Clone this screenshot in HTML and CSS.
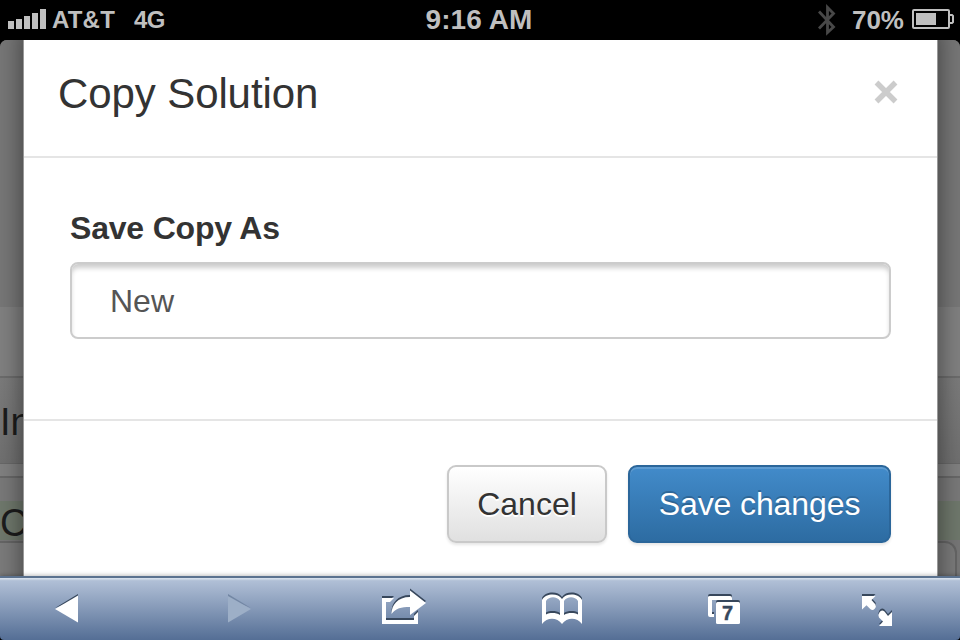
FILE: index.html
```html
<!DOCTYPE html>
<html lang="en">
<head>
<meta charset="utf-8">
<title>Copy Solution</title>
<link rel="stylesheet" href="styles.css">
</head>
<body>
<div class="phone">
  <header class="status">
    <div class="carrier">
      <svg class="signal" width="38" height="20" viewBox="0 0 38 20" fill="#bfbfbf"><path d="M0 12h6v8H0zM8 10h6v10H8zM16 7h6v13h-6zM24 4h6v16h-6zM32 0h6v20h-6z"/></svg>
      <span class="name">AT&amp;T</span><span class="net">4G</span>
    </div>
    <div class="time">9:16 AM</div>
    <div class="power">
      <svg class="bt" width="18" height="32" viewBox="0 0 18 32" fill="none" stroke="#484848" stroke-width="2.8"><path d="M1 7.500L15.500 23 9.500 28.500V3.500l6 6L1 24.500"/></svg>
      <span>70%</span>
      <svg class="battery" width="42" height="20" viewBox="0 0 42 20"><rect x="1" y="1" width="36" height="18" rx="1" fill="none" stroke="#bfbfbf" stroke-width="2"/><path d="M4 4h20v12H4z" fill="#bfbfbf"/><path d="M37 6h3l1 1v6l-1 1h-3" fill="none" stroke="#bfbfbf" stroke-width="2"/></svg>
    </div>
  </header>
  <main class="page">
    <div class="hero"></div>
    <div class="strip"></div>
    <div class="bar">Inputs</div>
    <div class="gap"></div>
    <div class="lead"></div>
    <div class="green">Cost</div>
    <div class="field"></div>
    <section class="modal">
      <div class="modal-head"><h1>Copy Solution</h1>
        <svg class="close" width="24" height="24" viewBox="0 0 24 24" stroke="#ccc" stroke-width="5.4"><path d="M2.500 2.500l19 19M21.500 2.500l-19 19"/></svg>
      </div>
      <div class="modal-body">
        <label>Save Copy As</label>
        <div class="input">New</div>
      </div>
      <div class="modal-foot"><button class="btn">Cancel</button><button class="btn primary">Save changes</button></div>
    </section>
  </main>
  <nav class="toolbar">
    <svg width="960" height="62" viewBox="0 578 960 62">
      <defs>
        <g id="share"><path d="M382 598h12l-4 4h-4v18h28v-4l4-4v12h-36z"/><path d="M410 590.500l16 12.500-16 12v-8c-9 0-14 1-18.500 7 0-9 6-17 18.500-17z"/></g>
        <path id="book" fill-rule="evenodd" d="M542 600c4-7 16-7 20-1 4-6 16-6 20 1v24c-5-7-15-7-20 0-5-7-15-7-20 0zM546 601v13.500c4-2 10-2 14 .5v-14c-3-5-11-5-14 0zM564 601v14c4-2.500 10-2.500 14-.5V601c-3-5-11-5-14 0z"/>
        <path id="expand" d="M862 596h13.500l-4 4 4 4.500q1 2-.8 4.200t-4.200.6l-4-4-4.500 4.200zM892 612v14h-13l4-4.500-4-4q-1.500-2.500.5-5.300t5-.7l3.500 4.500z"/>
      </defs>
      <path d="M55 608l23-14v5z" fill="#37475c"/><path d="M55 609l23-13.500v27z" fill="#fff"/>
      <path d="M228 594l23 14-23-9z" fill="#7387a4"/><path d="M228 596l23 13-23 13.500z" fill="#9dafc7"/>
      <use href="#share" y="-2" fill="#37475c"/><use href="#share" fill="#fff"/>
      <use href="#book" y="-2" fill="#37475c"/><use href="#book" fill="#fff"/>
      <path d="M708 596q0-2 2-2h20q2 0 2 2v2h-24z" fill="#37475c"/><path d="M708 597q0-1 2-1h20q2 0 2 2v3h-4v-1h-16v12h2v5h-4q-2 0-2-2z" fill="#fff"/>
      <path d="M712 612h2v2h-2zM716 602q0-2 2-2h20q2 0 2 2v3h-24z" fill="#37475c"/><rect x="716" y="602" width="24" height="22" rx="1.500" fill="#fff"/><text x="727.500" y="620" class="tabs">7</text>
      <use href="#expand" y="-2" fill="#37475c"/><use href="#expand" fill="#fff"/>
      <path d="M0 636q0 4 4 4H0zM960 636q0 4-4 4h4z" fill="#000"/>
    </svg>
  </nav>
</div>
</body>
</html>
```
FILE: styles.css
```css
* { box-sizing: border-box; }
body { margin: 0; background: #000; font-family: "Liberation Sans", Arial, sans-serif; }
.phone { width: 960px; height: 640px; overflow: hidden; display: flex; flex-direction: column; }
.status { height: 40px; flex: none; display: grid; grid-template-columns: 1fr auto 1fr; align-items: center; color: #bfbfbf; font-weight: bold; font-size: 24px; line-height: 40px; }
.carrier { display: flex; align-items: center; padding-left: 8px; }
.signal { margin-top: -2px; }
.name { margin-left: 6px; width: 82px; letter-spacing: .2px; }
.net { letter-spacing: -0.5px; }
.time { font-size: 28px; letter-spacing: .1px; margin-left: -2px; }
.power { display: flex; align-items: center; justify-content: flex-end; padding-right: 6px; font-size: 26px; }
.bt { margin-right: 16px; margin-top: -1px; }
.battery { margin: -2px 0 0 8px; }
.page { position: relative; flex: 1; overflow: hidden; background: #777; border-radius: 7px 7px 0 0; font-size: 38px; color: #1c1c1c; }
.hero { height: 267px; background: #777; }
.strip { height: 69px; background: #808080; }
.bar { height: 88px; border-top: 2px solid #6c6c6c; border-bottom: 1px solid #686868; background: linear-gradient(#7b7b7b, #707070); line-height: 89px; }
.gap { height: 14px; border-bottom: 2px solid #686868; background: #808080; }
.lead { height: 23px; background: #797979; }
.green { height: 39px; line-height: 44px; background: #6f786c; }
.field { height: 60px; margin: 1px 3px 0 -20px; border: 2px solid #656565; border-radius: 12px; background: #7b7b7b; }
.modal { position: absolute; left: 23px; top: -20px; width: 915px; height: 620px; background: #fff; border: 1px solid #999; box-shadow: 0 6px 24px rgba(0,0,0,.5); color: #333; }
.modal-head { height: 137px; border-bottom: 2px solid #e5e5e5; padding: 19px 38px 0 34px; display: flex; justify-content: space-between; }
h1 { margin: 30px 0 0; font-size: 42px; line-height: 48px; font-weight: normal; letter-spacing: -.1px; }
.close { margin: 40px 1px 0 0; }
.modal-body { height: 263px; padding: 50px 46px 0 46px; border-bottom: 2px solid #e5e5e5; }
label { display: block; font-size: 32px; font-weight: bold; line-height: 40px; height: 54px; letter-spacing: -.2px; }
.input { height: 77px; border: 2px solid #ccc; border-radius: 8px; padding-left: 38px; font-size: 32px; line-height: 74px; color: #555; box-shadow: inset 0 5px 5px -1px rgba(0,0,0,.2); }
.modal-foot { display: flex; justify-content: flex-end; gap: 21px; padding: 44px 46px 0 0; }
.btn { height: 78px; width: 160px; padding: 0; border: 2px solid #c9c9c9; border-radius: 9px; font: 32px/72px "Liberation Sans", Arial, sans-serif; color: #333; background: linear-gradient(#fff, #e0e0e0); text-shadow: 0 2px 0 #fff; box-shadow: 0 2px 3px rgba(0,0,0,.1); }
.primary { width: 263px; color: #fff; letter-spacing: -.1px; border-color: #2b669a; background: linear-gradient(#428bca, #2d6ca2); text-shadow: 0 -2px 0 rgba(0,0,0,.2); box-shadow: inset 0 2px 0 rgba(255,255,255,.15), 0 2px 3px rgba(0,0,0,.1); }
.toolbar { position: relative; height: 64px; flex: none; border-top: 2px solid #5b728f; background: linear-gradient(#d4deeb 0 1px, #b9c7da 2px, #b0bfd6 3px, #546e95); box-shadow: 0 -1px 4px rgba(0,0,0,.25); }
.toolbar svg { display: block; }
.tabs { font-size: 20px; font-weight: bold; fill: #37475c; stroke: #37475c; stroke-width: .4px; text-anchor: middle; }
```
